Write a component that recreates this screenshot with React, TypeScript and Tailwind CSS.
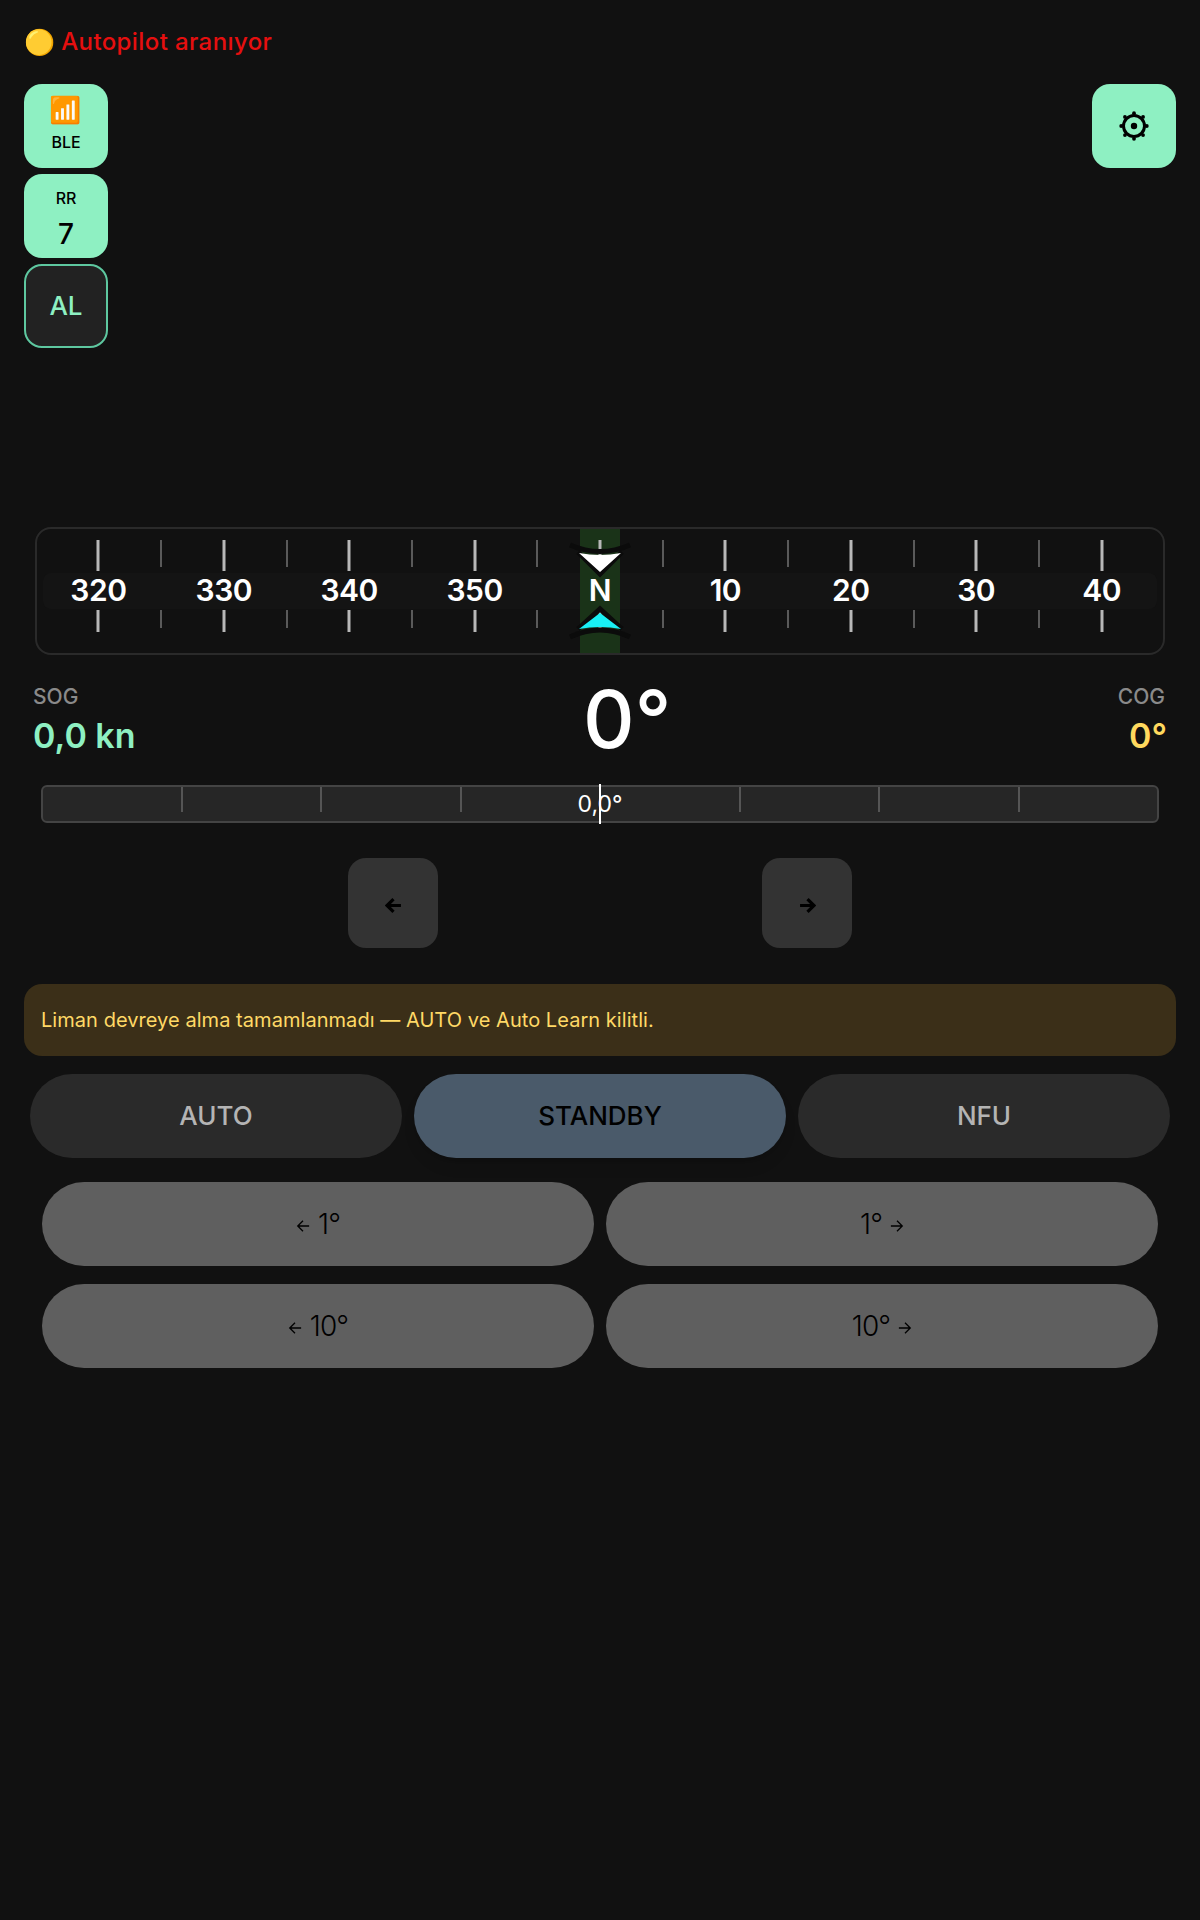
// Autopilot control screen — heading tape, SOG/COG readouts, rudder bar and mode buttons.

const font = { fontFamily: "Inter, 'Noto Sans', sans-serif" };

const labels: Record<number, string> = {
  [-40]: "320",
  [-30]: "330",
  [-20]: "340",
  [-10]: "350",
  0: "N",
  10: "10",
  20: "20",
  30: "30",
  40: "40",
};

const tapeDegrees = Array.from({ length: 17 }, (_, i) => -40 + i * 5);
const rudderTicks = [-3, -2, -1, 1, 2, 3];
const gearBumps = [0, 45, 90, 135, 180, 225, 270, 315];

function SideButton({ children, outline }: { children: React.ReactNode; outline?: boolean }) {
  return (
    <div
      className={`flex h-[84px] w-[84px] flex-col items-center justify-center rounded-[18px] ${
        outline ? "border-2 border-[#5ec8a0] bg-[#222222] text-[#8ef0c2]" : "bg-[#8ef0c2] text-black"
      }`}
    >
      {children}
    </div>
  );
}

function GearIcon() {
  return (
    <svg width="30" height="30" viewBox="0 0 30 30" fill="currentColor">
      <circle cx="15" cy="15" r="10.5" fill="none" stroke="currentColor" strokeWidth="3" />
      <circle cx="15" cy="15" r="3.2" />
      {gearBumps.map((a) => (
        <circle
          key={a}
          cx={15 + 12.8 * Math.cos((a * Math.PI) / 180)}
          cy={15 + 12.8 * Math.sin((a * Math.PI) / 180)}
          r="1.9"
        />
      ))}
    </svg>
  );
}

function HeadingTape() {
  return (
    <div className="relative mx-[35px] h-[128px] overflow-hidden rounded-[16px] border-2 border-[#2a2a2a]">
      <div className="absolute inset-x-[6px] top-[44px] h-[36px] rounded-lg bg-[#141414]" />
      <div className="absolute inset-y-0 left-[543px] w-[40px] bg-[#1a3318]" />
      {tapeDegrees.map((deg) => {
        const left = 563 + deg * 12.54;
        const major = deg % 10 === 0;
        return (
          <div key={deg} className="absolute inset-y-0 w-0" style={{ left }}>
            <div
              className={`absolute top-[11px] -translate-x-1/2 ${
                major ? "h-[31px] w-[3px] bg-[#b8b8b8]" : "h-[27px] w-[2px] bg-[#5a5a5a]"
              }`}
            />
            <div
              className={`absolute top-[81px] -translate-x-1/2 ${
                major ? "h-[22px] w-[3px] bg-[#b8b8b8]" : "h-[18px] w-[2px] bg-[#5a5a5a]"
              }`}
            />
            {major && (
              <span className="absolute top-[43px] -translate-x-1/2 whitespace-nowrap text-[30px] leading-[36px] font-semibold tracking-[-0.5px] text-white">
                {labels[deg]}
              </span>
            )}
          </div>
        );
      })}
      {/* Heading carets */}
      <svg className="absolute top-0 left-[531px]" width="64" height="126" viewBox="0 0 64 126">
        <path d="M2 16 Q32 29 62 16 M10 23 L32 45 L54 23" fill="none" stroke="#0b0b0b" strokeWidth="5" />
        <path d="M11 24 Q32 28 53 24 L32 43 Z" fill="#fff" />
        <path d="M2 108 Q32 94 62 108 M10 100 L32 80 L54 100" fill="none" stroke="#0b0b0b" strokeWidth="5" />
        <path d="M11 100 Q32 96 53 100 L32 84 Z" fill="#19f0f5" />
      </svg>
    </div>
  );
}

function RudderBar() {
  return (
    <div className="relative mx-[41px] mt-[24px] flex h-[38px] items-center justify-center rounded-md border-2 border-[#444444] bg-[#262626]">
      {rudderTicks.map((t) => (
        <div
          key={t}
          className="absolute top-0 h-[25px] w-[2px] bg-[#555555]"
          style={{ left: 556 + t * 139.5 }}
        />
      ))}
      <span className="text-[23px] leading-none text-white">0,0°</span>
      <div className="absolute -top-[3px] -bottom-[3px] left-[556px] w-[2px] bg-white" />
    </div>
  );
}

function NudgeButton({ children }: { children: React.ReactNode }) {
  return (
    <div className="flex h-[90px] w-[90px] items-center justify-center rounded-[18px] bg-[#333333] pt-[4px] text-black">
      {children}
    </div>
  );
}

function Arrow({ dir, size, weight = 1.5 }: { dir: "left" | "right"; size: number; weight?: number }) {
  return (
    <svg width={size} height={size} viewBox="0 0 16 16" fill="none" stroke="currentColor" strokeWidth={weight}>
      {dir === "left" ? <path d="M15 8H2M8 2L2 8l6 6" /> : <path d="M1 8h13M8 2l6 6-6 6" />}
    </svg>
  );
}

function StepButton({ label, dir }: { label: string; dir: "left" | "right" }) {
  return (
    <div className="flex h-[84px] flex-1 items-center justify-center gap-[8px] rounded-[42px] bg-[#5f5f5f] text-[28px] font-light tracking-[-0.8px] text-black">
      {dir === "left" && <span className="mt-[3px]"><Arrow dir="left" size={14} /></span>}
      <span>{label}</span>
      {dir === "right" && <span className="mt-[3px]"><Arrow dir="right" size={14} /></span>}
    </div>
  );
}

export default function App() {
  return (
    <div className="min-h-[1920px] w-[1200px] bg-[#111111]" style={font}>
      {/* Status */}
      <div className="flex h-[84px] items-center gap-[6px] px-[24px]">
        <span className="text-[25px] leading-none" style={{ fontFamily: "'Noto Color Emoji', sans-serif" }}>🟡</span>
        <span className="text-[24px] font-medium tracking-[0.4px] text-[#e60f0f]">Autopilot aranıyor</span>
      </div>

      {/* Side buttons */}
      <div className="flex items-start justify-between px-[24px]">
        <div className="flex flex-col gap-[6px]">
          <SideButton>
            <span className="-mt-[7px] text-[26px] leading-[36px]" style={{ fontFamily: "'Noto Color Emoji', sans-serif" }}>📶</span>
            <span className="mt-[3px] text-[16px] leading-[22px] font-medium">BLE</span>
          </SideButton>
          <SideButton>
            <span className="mt-[4px] text-[16px] leading-[22px] font-medium">RR</span>
            <span className="mt-[9px] text-[28px] leading-[32px] font-medium">7</span>
          </SideButton>
          <SideButton outline>
            <span className="-mt-[2px] text-[26px] font-medium">AL</span>
          </SideButton>
        </div>
        <SideButton>
          <GearIcon />
        </SideButton>
      </div>

      <div className="h-[179px]" />
      <HeadingTape />

      {/* SOG / heading / COG */}
      <div className="mt-[26px] flex h-[80px] items-start justify-between px-[33px]">
        <div className="pt-[4px]">
          <div className="text-[21px] leading-[24px] font-medium text-[#8a8a8a]">SOG</div>
          <div className="mt-[5px] text-[34px] leading-[44px] font-semibold text-[#8ef0c2]">0,0 kn</div>
        </div>
        <div className="-mt-[4px] ml-[1px] text-[80px] leading-[84px] font-medium text-white">0°</div>
        <div className="pt-[4px] text-right">
          <div className="pr-[2px] text-[21px] leading-[24px] font-medium text-[#8a8a8a]">COG</div>
          <div className="mt-[5px] text-[34px] leading-[44px] font-semibold text-[#ffd95e]">0°</div>
        </div>
      </div>

      <RudderBar />

      {/* Nudge arrows */}
      <div className="mt-[35px] flex justify-center gap-[324px]">
        <NudgeButton><Arrow dir="left" size={17} weight={3} /></NudgeButton>
        <NudgeButton><Arrow dir="right" size={17} weight={3} /></NudgeButton>
      </div>

      {/* Commissioning warning */}
      <div className="mx-[24px] mt-[36px] flex h-[72px] items-center rounded-[18px] bg-[#3b2f18] px-[17px] text-[20px] tracking-[0.05px] text-[#ffd966]">
        Liman devreye alma tamamlanmadı — AUTO ve Auto Learn kilitli.
      </div>

      {/* Modes */}
      <div className="mt-[18px] flex gap-[12px] px-[30px]">
        <div className="flex h-[84px] flex-1 items-center justify-center rounded-[42px] bg-[#2a2a2a] pb-[2px] text-[26px] font-medium text-[#b4b4b4]">AUTO</div>
        <div className="flex h-[84px] flex-1 items-center justify-center rounded-[42px] bg-[#4a5a6a] pb-[2px] text-[26px] font-medium text-black shadow-lg">STANDBY</div>
        <div className="flex h-[84px] flex-1 items-center justify-center rounded-[42px] bg-[#2a2a2a] pb-[2px] text-[26px] font-medium text-[#b4b4b4]">NFU</div>
      </div>

      {/* Step buttons */}
      <div className="mt-[24px] flex flex-col gap-[18px] px-[42px]">
        <div className="flex gap-[12px]">
          <StepButton label="1°" dir="left" />
          <StepButton label="1°" dir="right" />
        </div>
        <div className="flex gap-[12px]">
          <StepButton label="10°" dir="left" />
          <StepButton label="10°" dir="right" />
        </div>
      </div>
    </div>
  );
}
